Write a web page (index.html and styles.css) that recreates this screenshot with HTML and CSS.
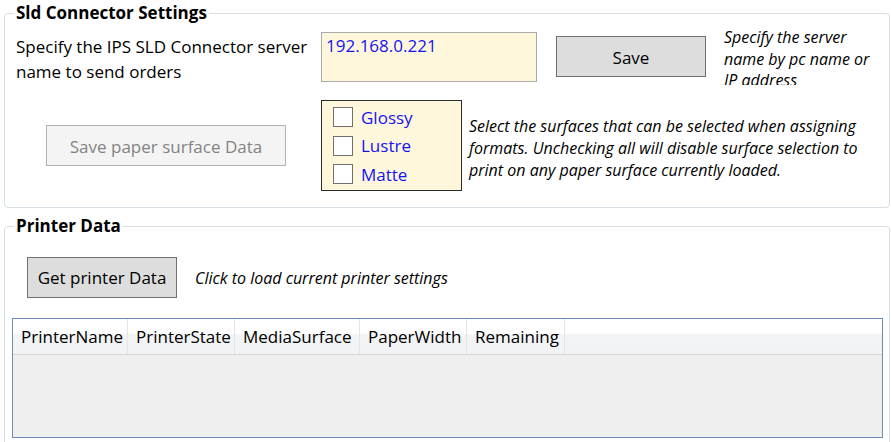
FILE: index.html
```html
<!DOCTYPE html>
<html lang="en">
<head>
<meta charset="utf-8">
<title>Sld Connector Settings</title>
<link rel="stylesheet" href="styles.css">
</head>
<body>
<div class="page">
  <fieldset class="group group-sld">
    <legend class="group-title">Sld Connector Settings</legend>
    <div class="row row-server">
      <div class="server-label">Specify the IPS SLD Connector server name to send orders</div>
      <div class="textbox">192.168.0.221</div>
      <button class="btn btn-save">Save</button>
      <div class="note note-server">Specify the server name by pc name or IP address</div>
    </div>
    <div class="row row-surface">
      <button class="btn btn-disabled" disabled>Save paper surface Data</button>
      <div class="surface-panel">
        <label class="check"><span class="box"></span><span class="check-text">Glossy</span></label>
        <label class="check"><span class="box"></span><span class="check-text">Lustre</span></label>
        <label class="check"><span class="box"></span><span class="check-text">Matte</span></label>
      </div>
      <div class="note note-surface">Select the surfaces that can be selected when assigning formats. Unchecking all will disable surface selection to print on any paper surface currently loaded.</div>
    </div>
  </fieldset>

  <fieldset class="group group-printer">
    <legend class="group-title">Printer Data</legend>
    <div class="row row-get">
      <button class="btn btn-get">Get printer Data</button>
      <div class="note note-get">Click to load current printer settings</div>
    </div>
    <div class="grid">
      <div class="grid-head">
        <div class="hcell c1">PrinterName</div>
        <div class="hcell c2">PrinterState</div>
        <div class="hcell c3">MediaSurface</div>
        <div class="hcell c4">PaperWidth</div>
        <div class="hcell c5">Remaining</div>
        <div class="hfill"></div>
      </div>
      <div class="grid-body"></div>
    </div>
  </fieldset>
</div>
</body>
</html>
```

FILE: styles.css
```css
html, body {
  margin: 0;
  padding: 0;
  background: #ffffff;
}
body {
  width: 891px;
  height: 442px;
  overflow: hidden;
  font-family: "Open Sans", "Noto Sans", "Liberation Sans", sans-serif;
  font-size: 17px;
  color: #000;
}
.page {
  padding: 3px 1px 0 4px;
}
.group {
  margin: 0;
  padding: 0;
  border: 1px solid #d5dfe5;
  border-radius: 4px;
  min-width: 0;
}
.group-title {
  margin-left: 9px;
  padding: 0 2px;
  font-weight: 700;
  font-size: 17px;
  line-height: 20px;
}
.group-sld {
  height: 203px;
}
.group-printer {
  margin-top: 8px;
  height: 240px;
}
.row {
  display: flex;
  align-items: flex-start;
}
.row-server {
  margin-top: 4px;
  height: 58px;
  padding-left: 11px;
}
.server-label {
  width: 300px;
  margin-top: 7px;
  line-height: 25px;
}
.textbox {
  margin-top: 5px;
  margin-left: 5px;
  height: 47px;
  width: 206px;
  border: 1px solid #ababab;
  background: #fff7dc;
  color: #1414f5;
  padding: 1px 4px 0;
  box-sizing: content-box;
  line-height: 24px;
}
.btn {
  font-family: inherit;
  font-size: 17px;
  margin: 0;
  padding: 0;
  box-sizing: border-box;
  color: #000;
  background: #dddddd;
  border: 1px solid #707070;
  border-radius: 0;
}
.btn-save {
  margin-top: 9px;
  margin-left: 19px;
  width: 150px;
  height: 41px;
  padding-top: 2px;
}
.note {
  font-style: italic;
  font-size: 16px;
}
.note-server {
  margin-left: 18px;
  width: 150px;
  height: 58px;
  overflow: hidden;
  line-height: 21.5px;
}
.row-surface {
  margin-top: 15px;
  padding-left: 41px;
}
.btn-disabled {
  margin-top: 25px;
  width: 240px;
  height: 41px;
  padding-top: 2px;
  background: #f4f4f4;
  border-color: #adb2b5;
  color: #838383;
}
.surface-panel {
  margin-left: 35px;
  width: 141px;
  height: 91px;
  box-sizing: border-box;
  border: 1px solid #2b2b2b;
  background: #fff7dc;
  padding: 2px 0 0 11px;
  display: flex;
  flex-direction: column;
}
.check {
  display: flex;
  align-items: center;
  height: 28.5px;
  color: #1414f5;
}
.box {
  width: 20px;
  height: 20px;
  box-sizing: border-box;
  border: 1px solid #707070;
  background: #ffffff;
}
.check-text {
  margin-left: 8px;
}
.note-surface {
  margin-left: 7px;
  margin-top: 15px;
  width: 400px;
  line-height: 22px;
}
.row-get {
  margin-top: 21px;
  padding-left: 22px;
  align-items: center;
}
.btn-get {
  width: 150px;
  height: 41px;
}
.note-get {
  margin-left: 18px;
}
.grid {
  margin: 20px 0 0 7px;
  width: 871px;
  height: 120px;
  box-sizing: border-box;
  border: 1px solid #6a8cb5;
  display: flex;
  flex-direction: column;
}
.grid-head {
  display: flex;
  height: 35px;
  border-bottom: 1px solid #d5d5d5;
  background: linear-gradient(#ffffff 0%, #ffffff 40%, #f3f4f6 45%, #f2f3f5 100%);
}
.hcell {
  box-sizing: border-box;
  padding-left: 8px;
  line-height: 36px;
  border-right: 1px solid #e4e5e7;
  white-space: nowrap;
}
.c1 { width: 115px; }
.c2 { width: 107px; }
.c3 { width: 125px; }
.c4 { width: 107px; }
.c5 { width: 98px; }
.hfill {
  flex: 1;
}
.grid-body {
  flex: 1;
  background: #efefef;
}
```
